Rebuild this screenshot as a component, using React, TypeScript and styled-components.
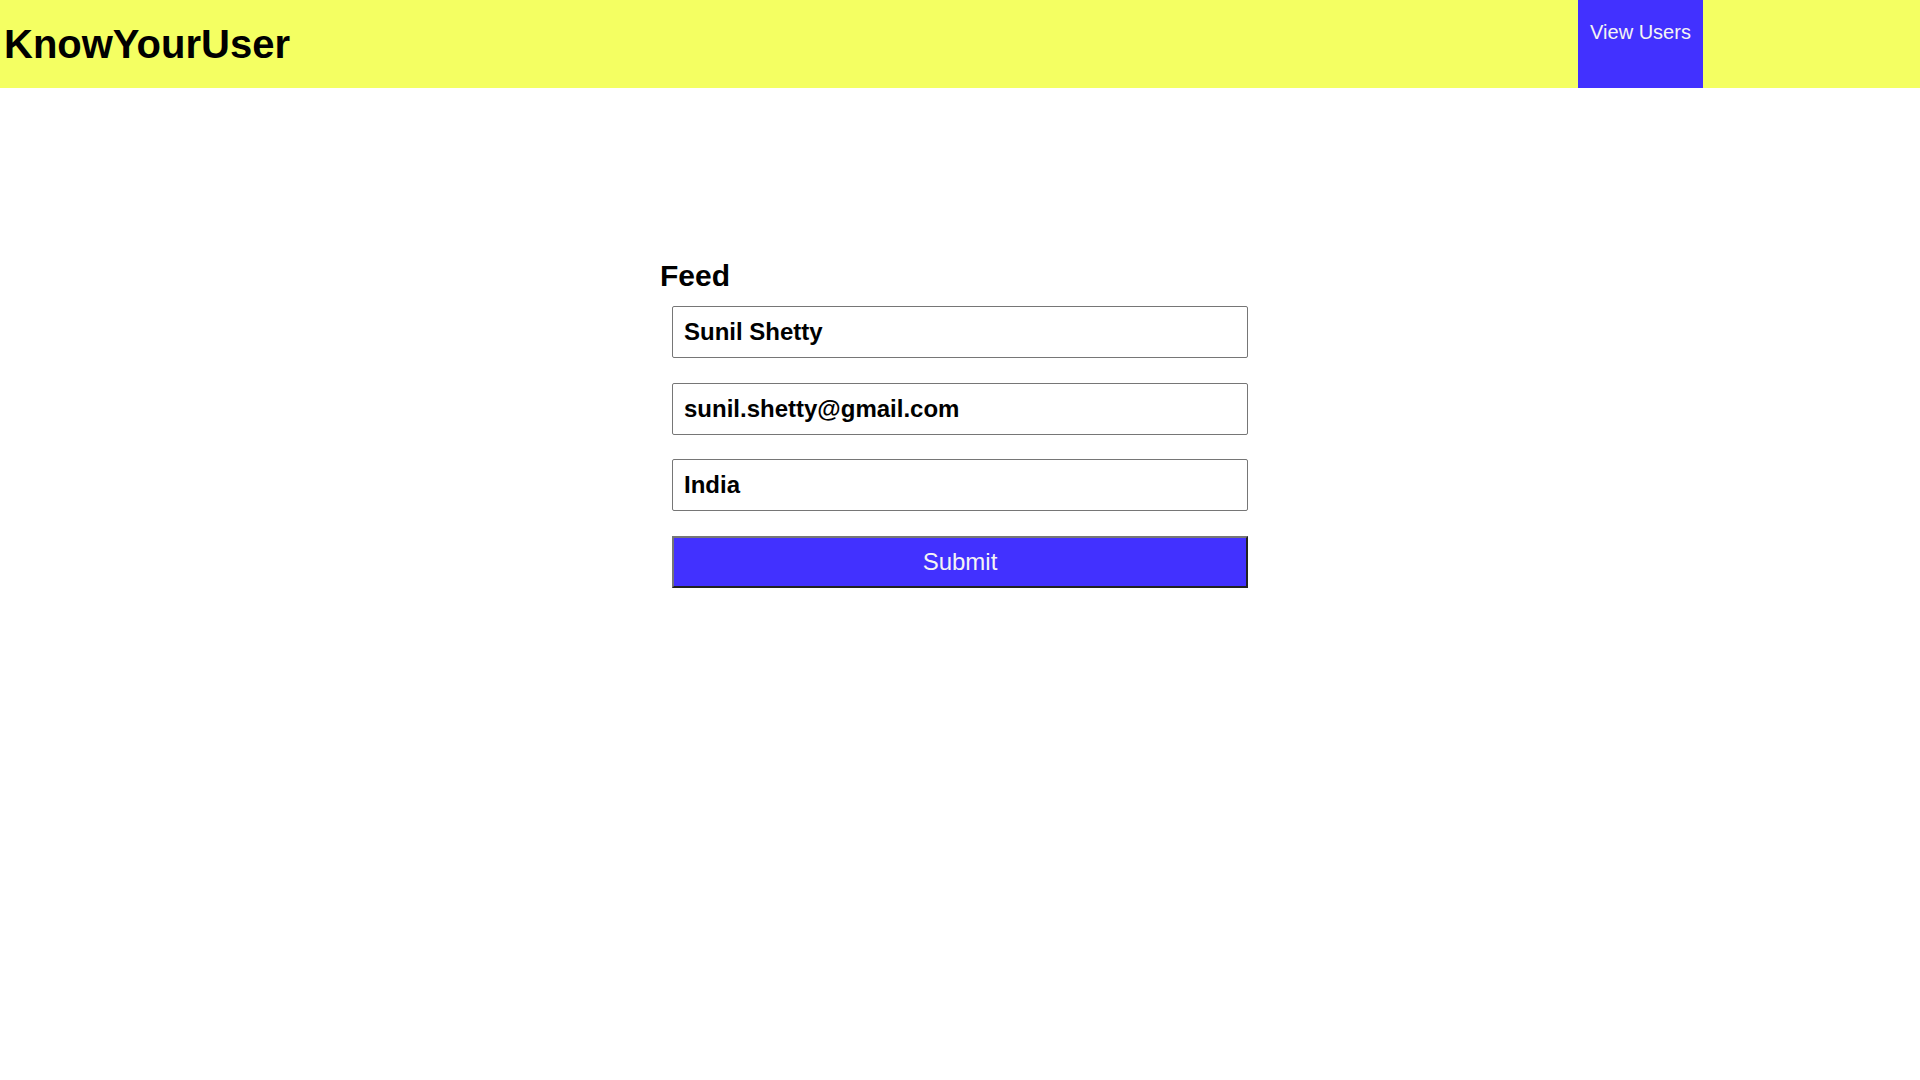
import React from "react";
import styled, { createGlobalStyle } from "styled-components";

const GlobalStyle = createGlobalStyle`
  html, body {
    margin: 0;
    padding: 0;
    background: #ffffff;
    font-family: "Liberation Sans", Arial, sans-serif;
  }
  * { box-sizing: border-box; }
`;

const Header = styled.header`
  display: flex;
  align-items: stretch;
  justify-content: space-between;
  height: 88px;
  background: #f4ff62;
  padding-left: 4px;
  padding-right: 217px;
`;

const Brand = styled.h1`
  margin: 0;
  align-self: center;
  font-size: 40px;
  font-weight: 700;
  color: #000;
  line-height: 46px;
`;

const NavButton = styled.a`
  display: block;
  width: 125px;
  padding-top: 21px;
  background: #4231ff;
  color: #f4f4f4;
  font-size: 20px;
  line-height: 23px;
  text-align: center;
  text-decoration: none;
  cursor: pointer;
`;

const Main = styled.main`
  display: flex;
  justify-content: center;
  padding-top: 171px;
`;

const Form = styled.form`
  display: flex;
  flex-direction: column;
  width: 600px;
`;

const Title = styled.h2`
  margin: 0 0 13px 0;
  font-size: 30px;
  line-height: 34px;
  font-weight: 700;
  color: #000;
`;

const Fields = styled.div`
  display: flex;
  flex-direction: column;
  gap: 24.5px;
  padding: 0 12px;
`;

const Field = styled.input`
  width: 100%;
  height: 52px;
  padding: 0 10px 0 11px;
  border: 1px solid #767676;
  border-radius: 2px;
  font-family: "Liberation Sans", Arial, sans-serif;
  font-size: 24px;
  font-weight: 700;
  color: #000;
  background: #fff;
  outline: none;
`;

const SubmitButton = styled.button`
  width: 100%;
  height: 52px;
  background: #4231ff;
  color: #f4f4f4;
  font-family: "Liberation Sans", Arial, sans-serif;
  font-size: 24px;
  border-style: solid;
  border-width: 2px;
  border-color: #767676 #222222 #222222 #767676;
  cursor: pointer;
`;

export default function App() {
  return (
    <>
      <GlobalStyle />
      <Header>
        <Brand>KnowYourUser</Brand>
        <NavButton>View Users</NavButton>
      </Header>
      <Main>
        <Form onSubmit={(e) => e.preventDefault()}>
          <Title>Feed</Title>
          <Fields>
            <Field defaultValue="Sunil Shetty" />
            <Field defaultValue="sunil.shetty@gmail.com" />
            <Field defaultValue="India" />
            <SubmitButton type="submit">Submit</SubmitButton>
          </Fields>
        </Form>
      </Main>
    </>
  );
}
